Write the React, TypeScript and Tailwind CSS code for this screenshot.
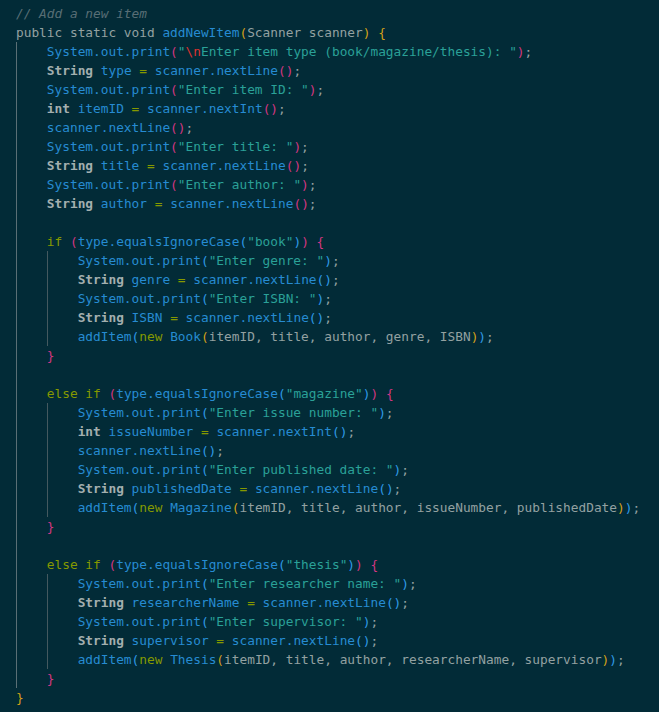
type Tok = [string, string];

const CLS: Record<string, string> = {
  c: "text-[#586e75] italic",
  k: "text-[#93a1a1]",
  t: "text-[#a3afaf] font-bold",
  b: "text-[#268bd2]",
  g: "text-[#859900]",
  s: "text-[#2aa198]",
  e: "text-[#dc322f]",
  p: "text-[#93a1a1]",
  y: "text-[#d4a017]",
  m: "text-[#d33682]",
  u: "text-[#2f9ae6]",
};

// helpers for repeated statements
const print = (msg: string, br: string): Tok[] => [
  ["b", "System.out.print"],
  [br, "("],
  ["s", `"${msg}"`],
  [br, ")"],
  ["p", ";"],
];

const decl = (type: string, name: string, call: string, br: string): Tok[] => [
  ["t", type],
  ["p", " "],
  ["b", name],
  ["p", " "],
  ["g", "="],
  ["p", " "],
  ["b", call],
  [br, "()"],
  ["p", ";"],
];

const addItem = (cls: string, args: string): Tok[] => [
  ["b", "addItem"],
  ["u", "("],
  ["g", "new"],
  ["p", " "],
  ["b", cls],
  ["y", "("],
  ["p", args],
  ["y", ")"],
  ["u", ")"],
  ["p", ";"],
];

const cond = (kw: string, word: string): Tok[] => [
  ["g", kw],
  ["p", " "],
  ["m", "("],
  ["b", "type.equalsIgnoreCase"],
  ["u", "("],
  ["s", `"${word}"`],
  ["u", ")"],
  ["m", ")"],
  ["p", " "],
  ["m", "{"],
];

const lines: { indent: number; toks: Tok[] }[] = [
  { indent: 0, toks: [["c", "// Add a new item"]] },
  {
    indent: 0,
    toks: [
      ["k", "public static void "],
      ["b", "addNewItem"],
      ["y", "("],
      ["k", "Scanner scanner"],
      ["y", ")"],
      ["p", " "],
      ["y", "{"],
    ],
  },
  {
    indent: 1,
    toks: [
      ["b", "System.out.print"],
      ["m", "("],
      ["s", '"'],
      ["e", "\\n"],
      ["s", 'Enter item type (book/magazine/thesis): "'],
      ["m", ")"],
      ["p", ";"],
    ],
  },
  { indent: 1, toks: decl("String", "type", "scanner.nextLine", "m") },
  { indent: 1, toks: print("Enter item ID: ", "m") },
  { indent: 1, toks: decl("int", "itemID", "scanner.nextInt", "m") },
  { indent: 1, toks: [["b", "scanner.nextLine"], ["m", "()"], ["p", ";"]] },
  { indent: 1, toks: print("Enter title: ", "m") },
  { indent: 1, toks: decl("String", "title", "scanner.nextLine", "m") },
  { indent: 1, toks: print("Enter author: ", "m") },
  { indent: 1, toks: decl("String", "author", "scanner.nextLine", "m") },
  { indent: 1, toks: [] },
  { indent: 1, toks: cond("if", "book") },
  { indent: 2, toks: print("Enter genre: ", "u") },
  { indent: 2, toks: decl("String", "genre", "scanner.nextLine", "u") },
  { indent: 2, toks: print("Enter ISBN: ", "u") },
  { indent: 2, toks: decl("String", "ISBN", "scanner.nextLine", "u") },
  { indent: 2, toks: addItem("Book", "itemID, title, author, genre, ISBN") },
  { indent: 1, toks: [["m", "}"]] },
  { indent: 1, toks: [] },
  { indent: 1, toks: cond("else if", "magazine") },
  { indent: 2, toks: print("Enter issue number: ", "u") },
  { indent: 2, toks: decl("int", "issueNumber", "scanner.nextInt", "u") },
  { indent: 2, toks: [["b", "scanner.nextLine"], ["u", "()"], ["p", ";"]] },
  { indent: 2, toks: print("Enter published date: ", "u") },
  { indent: 2, toks: decl("String", "publishedDate", "scanner.nextLine", "u") },
  { indent: 2, toks: addItem("Magazine", "itemID, title, author, issueNumber, publishedDate") },
  { indent: 1, toks: [["m", "}"]] },
  { indent: 1, toks: [] },
  { indent: 1, toks: cond("else if", "thesis") },
  { indent: 2, toks: print("Enter researcher name: ", "u") },
  { indent: 2, toks: decl("String", "researcherName", "scanner.nextLine", "u") },
  { indent: 2, toks: print("Enter supervisor: ", "u") },
  { indent: 2, toks: decl("String", "supervisor", "scanner.nextLine", "u") },
  { indent: 2, toks: addItem("Thesis", "itemID, title, author, researcherName, supervisor") },
  { indent: 1, toks: [["m", "}"]] },
  { indent: 0, toks: [["y", "}"]] },
];

export default function App() {
  return (
    <div
      className="min-h-screen w-full bg-[#022b37] pt-[4px] pl-[16px] text-[12.8px] leading-[19px]"
      style={{ fontFamily: '"DejaVu Sans Mono", "Liberation Mono", monospace' }}
    >
      {lines.map((line, i) => (
        <div key={i} className="flex h-[19px] whitespace-pre">
          {Array.from({ length: line.indent }).map((_, j) => (
            <span
              key={j}
              className={`inline-block h-[19px] w-[4ch] shrink-0 border-l ${
                j === 0 ? "border-[#5a6f75]" : "border-[#44595f]"
              }`}
            />
          ))}
          <span>
            {line.toks.map(([c, text], k) => (
              <span key={k} className={CLS[c]}>
                {text}
              </span>
            ))}
          </span>
        </div>
      ))}
    </div>
  );
}
